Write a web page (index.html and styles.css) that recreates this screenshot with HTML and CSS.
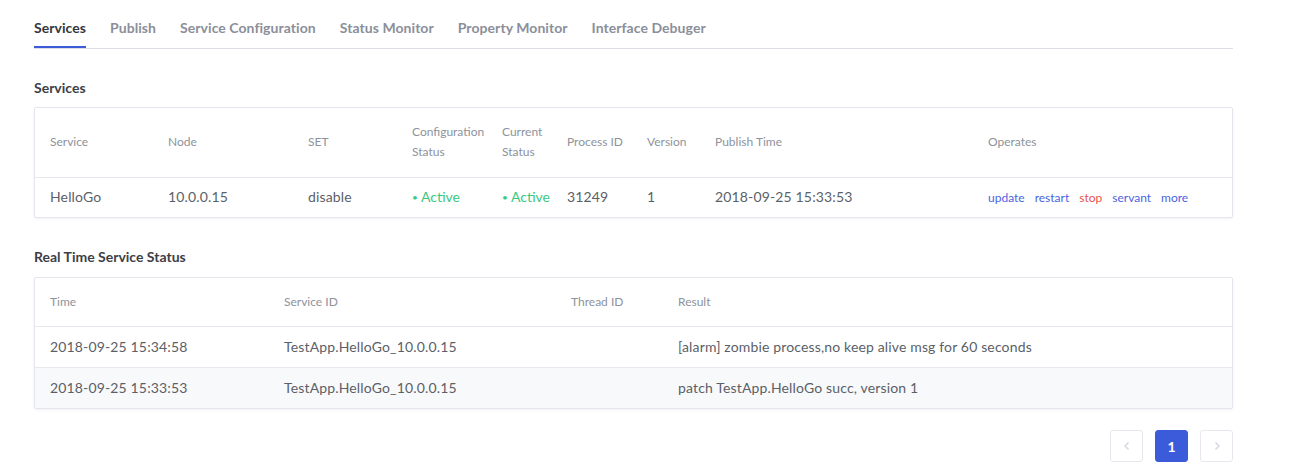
FILE: index.html
```html
<!DOCTYPE html>
<html>
<head>
<meta charset="utf-8">
<link rel="stylesheet" href="styles.css">
</head>
<body>
<div class="page">
  <nav class="tabs">
    <span class="tab active">Services</span>
    <span class="tab">Publish</span>
    <span class="tab">Service Configuration</span>
    <span class="tab">Status Monitor</span>
    <span class="tab">Property Monitor</span>
    <span class="tab">Interface Debuger</span>
  </nav>

  <h3 class="section-title">Services</h3>
  <div class="card">
    <table class="grid services">
      <colgroup>
        <col style="width:133px"><col style="width:140px"><col style="width:104px"><col style="width:90px"><col style="width:65px"><col style="width:80px"><col style="width:68px"><col style="width:273px"><col>
      </colgroup>
      <thead>
        <tr>
          <th>Service</th><th>Node</th><th>SET</th><th>Configuration Status</th><th>Current Status</th><th>Process ID</th><th>Version</th><th>Publish Time</th><th>Operates</th>
        </tr>
      </thead>
      <tbody>
        <tr>
          <td>HelloGo</td><td>10.0.0.15</td><td>disable</td>
          <td><span class="status"><span class="dot">•</span> Active</span></td>
          <td><span class="status"><span class="dot">•</span> Active</span></td>
          <td>31249</td><td>1</td><td>2018-09-25 15:33:53</td>
          <td class="ops"><a>update</a><a>restart</a><a class="danger">stop</a><a>servant</a><a>more</a></td>
        </tr>
      </tbody>
    </table>
  </div>

  <h3 class="section-title second">Real Time Service Status</h3>
  <div class="card">
    <table class="grid status-table">
      <colgroup>
        <col style="width:249px"><col style="width:287px"><col style="width:107px"><col>
      </colgroup>
      <thead>
        <tr><th>Time</th><th>Service ID</th><th>Thread ID</th><th>Result</th></tr>
      </thead>
      <tbody>
        <tr><td>2018-09-25 15:34:58</td><td>TestApp.HelloGo_10.0.0.15</td><td></td><td>[alarm] zombie process,no keep alive msg for 60 seconds</td></tr>
        <tr class="striped"><td>2018-09-25 15:33:53</td><td>TestApp.HelloGo_10.0.0.15</td><td></td><td>patch TestApp.HelloGo succ, version 1</td></tr>
      </tbody>
    </table>
  </div>

  <div class="pager">
    <button class="pg-btn disabled"><svg width="10" height="10" viewBox="0 0 10 10"><path d="M6.5 1.5 L3 5 L6.5 8.5" fill="none" stroke="#d8dbe3" stroke-width="1.6"/></svg></button>
    <button class="pg-btn current">1</button>
    <button class="pg-btn disabled"><svg width="10" height="10" viewBox="0 0 10 10"><path d="M3.5 1.5 L7 5 L3.5 8.5" fill="none" stroke="#d8dbe3" stroke-width="1.6"/></svg></button>
  </div>
</div>
</body>
</html>
```

FILE: styles.css
```css
* { box-sizing: border-box; }
html, body { margin: 0; padding: 0; background: #fff; }
body {
  font-family: Lato, "Noto Sans", "Liberation Sans", sans-serif;
  color: #5b5f68;
}
.page {
  width: 1199px;
  margin-left: 34px;
}
.tabs {
  display: flex;
  gap: 24px;
  height: 49px;
  border-bottom: 1px solid #dcdfe6;
  align-items: flex-start;
}
.tab {
  font-size: 14px;
  font-weight: 700;
  color: #8b8f9a;
  line-height: 20px;
  letter-spacing: 0.06px;
  padding-top: 18px;
  height: 48px;
}
.tab.active {
  color: #34373e;
  border-bottom: 2px solid #3b5bdb;
}
.section-title {
  margin: 0;
  font-size: 14px;
  font-weight: 700;
  color: #3d4047;
  line-height: 20px;
  padding-top: 29px;
  padding-bottom: 9px;
}
.section-title.second { padding-bottom: 10px; }
.card {
  border: 1px solid #e3e6ec;
  box-shadow: 0 1px 3px rgba(0,0,0,0.06);
  border-radius: 2px;
}
.grid {
  width: 100%;
  border-collapse: collapse;
  table-layout: fixed;
}
.grid th {
  font-size: 12px;
  font-weight: 400;
  color: #8e929b;
  text-align: left;
  line-height: 20px;
  padding: 0 6px 0 0;
  vertical-align: middle;
}
.grid td {
  font-size: 14px;
  color: #5b5f68;
  line-height: 20px;
  letter-spacing: 0.15px;
  padding: 0 6px 0 0;
  text-align: left;
  white-space: nowrap;
}
.grid th:first-child, .grid td:first-child { padding-left: 15px; }
.services thead tr { height: 69px; }
.services tbody tr { height: 40px; border-top: 1px solid #e6e8ee; }
.status-table thead tr { height: 48px; }
.status-table tbody tr { height: 41px; border-top: 1px solid #e6e8ee; }
.status-table tbody tr.striped { background: #f8f9fb; }
.status { color: #3cc97f; letter-spacing: 0; }
.status .dot { font-size: 10px; vertical-align: 1px; }
.ops a {
  font-size: 12px;
  letter-spacing: 0;
  color: #4a64e0;
  margin-right: 10px;
}
.ops a.danger { color: #e8544c; }
.pager {
  display: flex;
  justify-content: flex-end;
  gap: 12px;
  margin-top: 21px;
}
.pg-btn {
  width: 33px;
  height: 32px;
  border: 1px solid #e6e8ee;
  border-radius: 3px;
  background: #fff;
  display: flex;
  align-items: center;
  justify-content: center;
  padding: 0;
  font-family: Lato, "Liberation Sans", sans-serif;
  font-size: 14px;
  font-weight: 700;
}
.pg-btn.current {
  background: #3b5bdb;
  border-color: #3b5bdb;
  color: #fff;
}
```
